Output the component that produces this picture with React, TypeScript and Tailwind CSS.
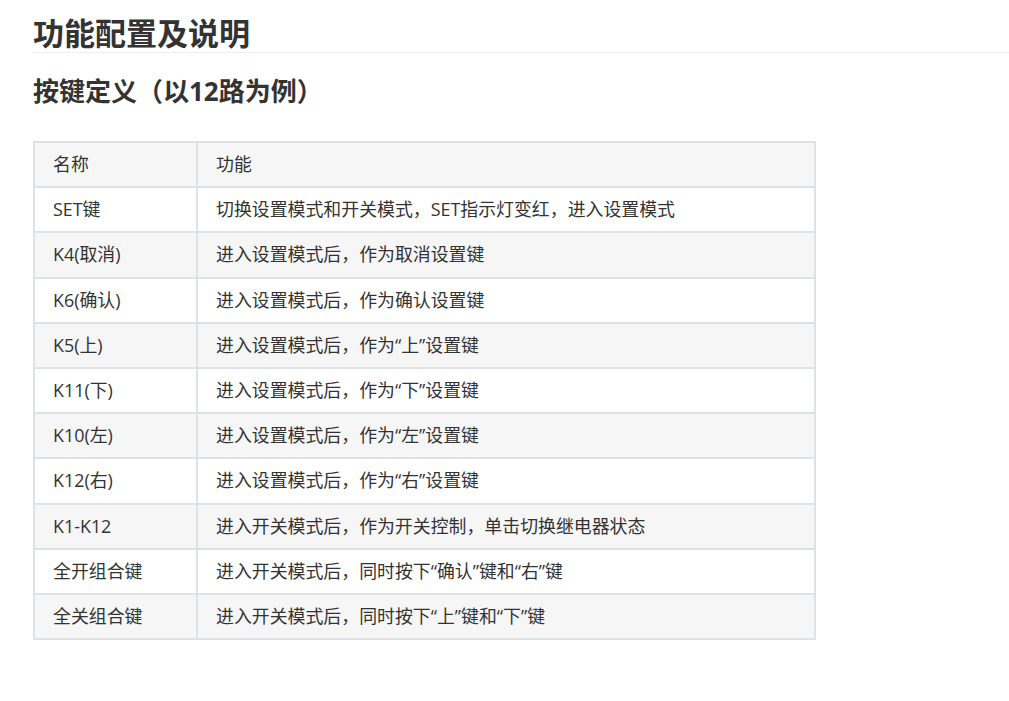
import React from "react";

const rows: [string, string][] = [
  ["SET键", "切换设置模式和开关模式，SET指示灯变红，进入设置模式"],
  ["K4(取消)", "进入设置模式后，作为取消设置键"],
  ["K6(确认)", "进入设置模式后，作为确认设置键"],
  ["K5(上)", "进入设置模式后，作为“上”设置键"],
  ["K11(下)", "进入设置模式后，作为“下”设置键"],
  ["K10(左)", "进入设置模式后，作为“左”设置键"],
  ["K12(右)", "进入设置模式后，作为“右”设置键"],
  ["K1-K12", "进入开关模式后，作为开关控制，单击切换继电器状态"],
  ["全开组合键", "进入开关模式后，同时按下“确认”键和“右”键"],
  ["全关组合键", "进入开关模式后，同时按下“上”键和“下”键"],
];

export default function App() {
  return (
    <div
      className="min-h-[701px] bg-white pl-[33px] pt-[15px] text-[#333]"
      style={{ fontFamily: '"Open Sans", "Noto Sans CJK SC", sans-serif' }}
    >
      <h1 className="border-b border-[#eeeeee] pb-px text-[31px] font-bold leading-[36px]">
        功能配置及说明
      </h1>
      <h2 className="mt-[21px] text-[26px] font-bold leading-[34px]">
        按键定义（以12路为例）
      </h2>
      <table className="mt-[33px] w-[783px] border-collapse text-[17.9px] leading-[25.2px]">
        <thead>
          <tr className="bg-[#f6f6f6]">
            <th className="w-[163px] border-2 border-[#dfe2e5] px-[18px] py-[9px] text-left font-normal">
              名称
            </th>
            <th className="border-2 border-[#dfe2e5] px-[18px] py-[9px] text-left font-normal">
              功能
            </th>
          </tr>
        </thead>
        <tbody>
          {rows.map(([a, b], i) => (
            <tr key={a} className={i % 2 === 1 ? "bg-[#f6f6f6]" : "bg-white"}>
              <td className="border-2 border-[#dfe2e5] px-[18px] py-[9px]">{a}</td>
              <td className="border-2 border-[#dfe2e5] px-[18px] py-[9px]">{b}</td>
            </tr>
          ))}
        </tbody>
      </table>
    </div>
  );
}
